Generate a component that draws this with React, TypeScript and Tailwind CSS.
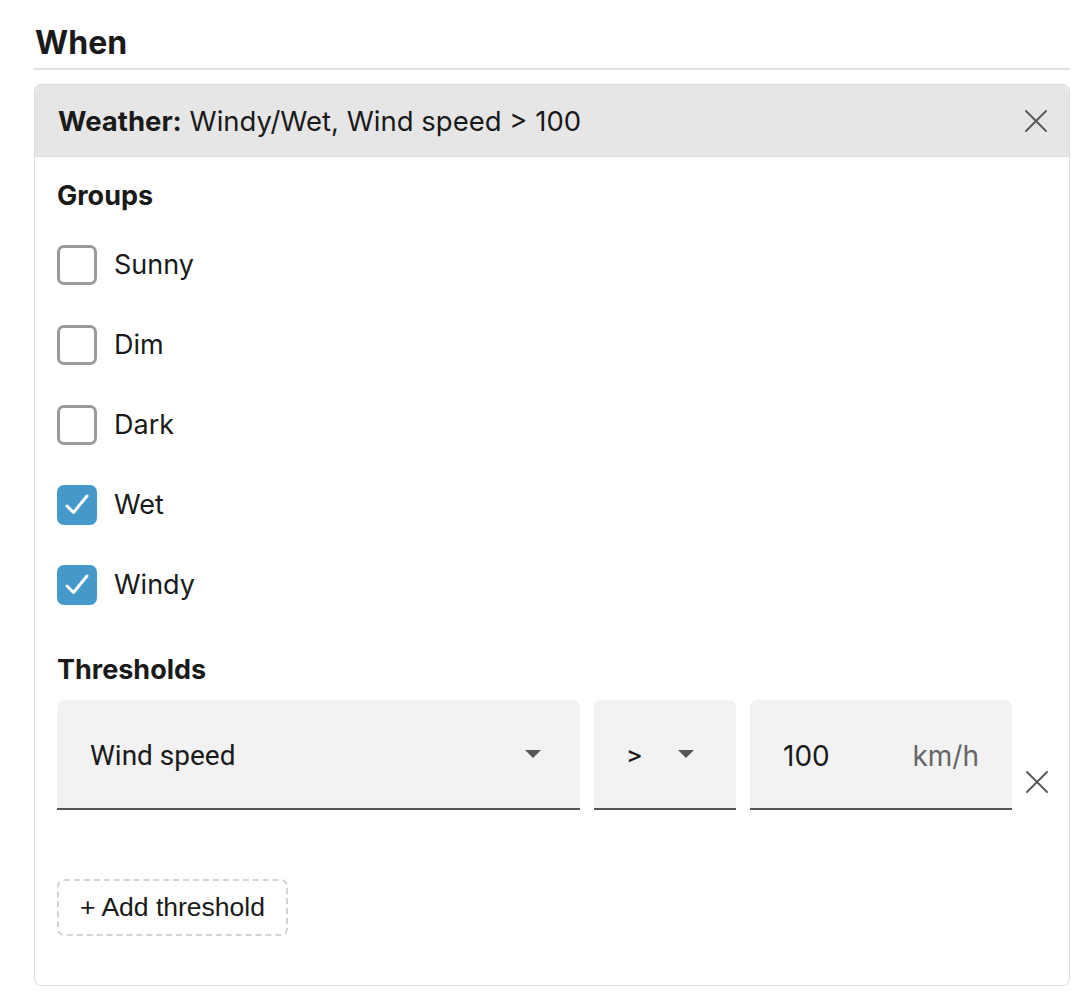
const groups = [
  { name: 'Sunny', checked: false },
  { name: 'Dim', checked: false },
  { name: 'Dark', checked: false },
  { name: 'Wet', checked: true },
  { name: 'Windy', checked: true },
];

function Close({ className }: { className?: string }) {
  return (
    <svg viewBox="0 0 22 22" className={className} fill="none" stroke="#555" strokeWidth="1.8" strokeLinecap="round">
      <path d="M1 1l20 20M21 1L1 21" />
    </svg>
  );
}

function Checkbox({ checked }: { checked: boolean }) {
  if (checked) {
    return (
      <span className="flex h-10 w-10 shrink-0 items-center justify-center rounded-[7px] bg-[#4499c9]">
        <svg viewBox="0 0 40 40" className="h-10 w-10" fill="none" stroke="white" strokeWidth="3" strokeLinecap="round" strokeLinejoin="round">
          <path d="M10 21l6.5 6.5L30 11" />
        </svg>
      </span>
    );
  }
  return <span className="block h-10 w-10 shrink-0 rounded-[7px] border-[3px] border-[#9a9a9a] bg-white" />;
}

function Caret() {
  return (
    <svg viewBox="0 0 16 8" className="h-2 w-4 shrink-0" fill="#555">
      <path d="M0 0h16L8 8z" />
    </svg>
  );
}

export default function App() {
  return (
    <div className="min-h-screen bg-white pl-[33px] pr-[8px] pt-[23px] font-['Inter',sans-serif] text-[#1a1a1a]">
      <h2 className="pl-[2px] text-[32px] font-bold leading-[40px]">When</h2>
      <div className="mt-[5px] h-[2px] w-[1037px] bg-[#e2e2e2]" />

      <div className="ml-[1px] mt-[14px] w-[1036px] overflow-hidden rounded-[7px] border border-[#dcdcdc]">
        <div className="flex h-[72px] items-center justify-between border-b border-[#dcdcdc] bg-[#e6e6e6] pl-[23px] pr-[22px]">
          <div className="pt-[3px] text-[27.5px]">
            <span className="font-bold">Weather:</span> Windy/Wet, Wind speed &gt; 100
          </div>
          <Close className="h-[22px] w-[22px]" />
        </div>

        <div className="pb-[49px] pl-[22px] pr-[21px]">
          <div className="mt-[23px] text-[27px] font-bold leading-[32px]">Groups</div>
          <div className="mt-[33px] flex flex-col gap-10">
            {groups.map((g) => (
              <label key={g.name} className="flex h-10 items-center gap-[17px] text-[27px]">
                <Checkbox checked={g.checked} />
                <span className="pt-[1px]">{g.name}</span>
              </label>
            ))}
          </div>

          <div className="mt-[49px] text-[27px] font-bold leading-[32px]">Thresholds</div>
          <div className="mt-[14px] flex items-end gap-[14px] font-['Roboto',sans-serif] text-[28px]">
            <div className="flex h-[110px] w-[523px] shrink-0 items-center justify-between rounded-t-[7px] border-b-2 border-[#555] bg-[#f2f2f2] pl-[33px] pr-[39px]">
              <span className="pt-[3px]">Wind speed</span>
              <Caret />
            </div>
            <div className="flex h-[110px] w-[142px] shrink-0 items-center justify-between rounded-t-[7px] border-b-2 border-[#555] bg-[#f2f2f2] pl-[33px] pr-[42px]">
              <span className="pt-[3px]">&gt;</span>
              <Caret />
            </div>
            <div className="flex h-[110px] w-[262px] shrink-0 items-center justify-between rounded-t-[7px] border-b-2 border-[#555] bg-[#f2f2f2] pl-[33px] pr-[33px] pt-[3px] font-['Inter',sans-serif]">
              <span>100</span>
              <span className="text-[#666]">km/h</span>
            </div>
            <Close className="mb-[17px] h-[22px] w-[22px] shrink-0" />
          </div>

          <button className="mt-[69px] flex h-[57px] items-center rounded-[7px] border-2 border-dashed border-[#d4d4d4] px-[21px] font-['Liberation_Sans',sans-serif] text-[26.5px] text-[#1a1a1a]">
            + Add threshold
          </button>
        </div>
      </div>
    </div>
  );
}
